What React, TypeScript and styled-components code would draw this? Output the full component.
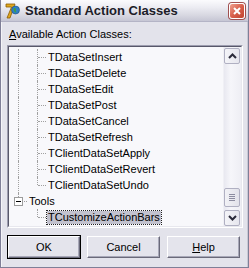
import React from "react";
import styled, { createGlobalStyle } from "styled-components";

const Global = createGlobalStyle`
  html, body { margin: 0; padding: 0; background: #ffffff; }
  body { font-family: "Liberation Sans", Arial, sans-serif; }
`;

const Window = styled.div`
  width: 249px;
  height: 268px;
  box-sizing: border-box;
  display: flex;
  flex-direction: column;
  background: #e3e3eb;
  border: 1px solid #7f7f97;
  border-top: none;
  overflow: hidden;
`;

const TitleBar = styled.div`
  height: 22px;
  flex: none;
  display: flex;
  align-items: center;
  padding: 0 2px 0 2px;
  background: linear-gradient(#fbfbfd 0%, #ececf2 35%, #d6d6e0 75%, #c6c6d4 100%);
  border-bottom: 1px solid #b4b4c6;
  box-sizing: border-box;
`;

const Title = styled.span`
  font-family: "Liberation Sans", Arial, sans-serif;
  font-weight: bold;
  font-size: 13px;
  color: #1c1c28;
  margin-left: 4px;
  flex: 1;
  white-space: nowrap;
`;

const CloseBtn = styled.div`
  width: 14px;
  height: 14px;
  border-radius: 3px;
  background: linear-gradient(135deg, #f0a090 0%, #d8604c 50%, #c04430 100%);
  border: 1px solid #ffffff;
  box-shadow: 0 0 0 1px #a05050;
  display: flex;
  align-items: center;
  justify-content: center;
  margin-right: 1px;
`;

const Body = styled.div`
  flex: 1;
  display: flex;
  flex-direction: column;
  padding: 6px 5px 0 5px;
  border-left: 1px solid #f4f4f8;
  border-right: 1px solid #c8c8d4;
`;

const Label = styled.div`
  font-size: 11px;
  line-height: 13px;
  color: #000;
  margin-left: 2px;
  height: 13px;
  white-space: nowrap;
`;

const U = styled.span`
  text-decoration: underline;
`;

const ListBox = styled.div`
  margin-top: 4px;
  width: 236px;
  height: 183px;
  box-sizing: border-box;
  border-top: 1px solid #9d9daf;
  border-left: 1px solid #9d9daf;
  border-right: 1px solid #ffffff;
  border-bottom: 1px solid #ffffff;
  display: flex;
`;

const ListInner = styled.div`
  flex: 1;
  display: flex;
  border-top: 1px solid #58586a;
  border-left: 1px solid #58586a;
  border-right: 1px solid #e8e8ee;
  border-bottom: 1px solid #e8e8ee;
  background: #f8f8fb;
  overflow: hidden;
`;

const Tree = styled.div`
  flex: 1;
  padding-top: 2px;
  display: flex;
  flex-direction: column;
`;

const Row = styled.div`
  height: 16px;
  display: flex;
  align-items: center;
  flex: none;
`;

const Guide = styled.div<{ $v: "full" | "top" | "none"; $h?: boolean }>`
  position: relative;
  width: 19px;
  height: 16px;
  flex: none;
  &::before {
    content: "";
    display: ${(p) => (p.$v === "none" ? "none" : "block")};
    position: absolute;
    left: 9px;
    top: 0;
    height: ${(p) => (p.$v === "full" ? "16px" : "8px")};
    border-left: 1px dotted #a0a0a0;
  }
  &::after {
    content: "";
    display: ${(p) => (p.$h ? "block" : "none")};
    position: absolute;
    left: 10px;
    top: 8px;
    width: 8px;
    border-top: 1px dotted #a0a0a0;
  }
`;

const ExpandBox = styled.div`
  position: absolute;
  left: 5px;
  top: 4px;
  width: 7px;
  height: 7px;
  border: 1px solid #9c9c9c;
  background: #ffffff;
  z-index: 1;
  &::before {
    content: "";
    position: absolute;
    left: 1px;
    top: 3px;
    width: 5px;
    height: 1px;
    background: #000;
  }
`;

const ItemText = styled.span<{ $selected?: boolean }>`
  font-size: 11px;
  line-height: 13px;
  color: #000;
  white-space: nowrap;
  padding: 0 1px;
  background: ${(p) => (p.$selected ? "#c2c2ce" : "transparent")};
  outline: ${(p) => (p.$selected ? "1px dotted #202020" : "none")};
  outline-offset: 0;
`;

const ScrollBar = styled.div`
  width: 17px;
  flex: none;
  display: flex;
  flex-direction: column;
  background: linear-gradient(90deg, #e8e8f0 0%, #f6f6fa 40%, #eeeef4 100%);
  border-left: 1px solid #f0f0f5;
`;

const ScrollBtn = styled.div`
  height: 16px;
  box-sizing: border-box;
  margin: 1px 1px 0 0;
  border: 1px solid #b0b0c2;
  border-radius: 2px;
  background: linear-gradient(90deg, #f4f4f8 0%, #e6e6ee 100%);
  display: flex;
  align-items: center;
  justify-content: center;
  flex: none;
`;

const Track = styled.div`
  flex: 1;
  display: flex;
  flex-direction: column;
  justify-content: flex-end;
`;

const Thumb = styled.div`
  height: 19px;
  box-sizing: border-box;
  margin: 0 1px 2px 0;
  border: 1px solid #b0b0c2;
  border-radius: 2px;
  background: linear-gradient(90deg, #f2f2f6 0%, #e2e2ea 100%);
  display: flex;
  flex-direction: column;
  align-items: center;
  justify-content: center;
  gap: 1px;
`;

const Grip = styled.div`
  width: 6px;
  height: 1px;
  background: #8c8ca0;
`;

const ButtonRow = styled.div`
  display: flex;
  gap: 7px;
  margin-top: 8px;
  padding-left: 1px;
`;

const Button = styled.div<{ $default?: boolean }>`
  width: ${(p) => (p.$default ? "72px" : "73px")};
  height: 22px;
  box-sizing: border-box;
  display: flex;
  align-items: center;
  justify-content: center;
  font-size: 11px;
  color: #000;
  background: #e4e4ec;
  border-top: 1px solid #ffffff;
  border-left: 1px solid #ffffff;
  border-right: 1px solid #6a6a7a;
  border-bottom: 1px solid #6a6a7a;
  box-shadow: inset -1px -1px 0 #a8a8b8;
  outline: ${(p) => (p.$default ? "1px solid #000" : "none")};
  outline-offset: 0;
`;

const Chevron = ({ up }: { up?: boolean }) => (
  <svg width="9" height="6" viewBox="0 0 9 6">
    <path
      d={up ? "M1 5 L4.5 1.5 L8 5" : "M1 1 L4.5 4.5 L8 1"}
      fill="none"
      stroke="#2a2a3a"
      strokeWidth="2"
    />
  </svg>
);

const AppIcon = () => (
  <svg width="18" height="18" viewBox="0 0 18 18">
    <path d="M3 2 H12 L7 16 H4 L8.5 5 H3 Z" fill="#e0a820" stroke="#8a5a00" strokeWidth="0.8" />
    <circle cx="12.5" cy="8" r="4" fill="#2f7fc8" stroke="#1a4f80" strokeWidth="0.6" />
    <path d="M10.5 6.5 Q12 5.5 13 7 Q12 9 13.5 10.5 Q11.5 10.5 11 9 Z" fill="#3fa040" />
  </svg>
);

const CloseX = () => (
  <svg width="8" height="8" viewBox="0 0 8 8">
    <path d="M1 1 L7 7 M7 1 L1 7" stroke="#ffffff" strokeWidth="2" />
  </svg>
);

const dataItems = [
  "TDataSetInsert",
  "TDataSetDelete",
  "TDataSetEdit",
  "TDataSetPost",
  "TDataSetCancel",
  "TDataSetRefresh",
  "TClientDataSetApply",
  "TClientDataSetRevert",
  "TClientDataSetUndo",
];

export default function App() {
  return (
    <>
      <Global />
      <Window>
        <TitleBar>
          <AppIcon />
          <Title>Standard Action Classes</Title>
          <CloseBtn>
            <CloseX />
          </CloseBtn>
        </TitleBar>
        <Body>
          <Label>
            <U>A</U>vailable Action Classes:
          </Label>
          <ListBox>
            <ListInner>
              <Tree>
                {dataItems.map((t, i) => (
                  <Row key={t}>
                    <Guide $v="full" />
                    <Guide $v={i === dataItems.length - 1 ? "top" : "full"} $h />
                    <ItemText>{t}</ItemText>
                  </Row>
                ))}
                <Row>
                  <Guide $v="top" $h>
                    <ExpandBox />
                  </Guide>
                  <ItemText>Tools</ItemText>
                </Row>
                <Row>
                  <Guide $v="none" />
                  <Guide $v="top" $h />
                  <ItemText $selected>TCustomizeActionBars</ItemText>
                </Row>
              </Tree>
              <ScrollBar>
                <ScrollBtn>
                  <Chevron up />
                </ScrollBtn>
                <Track>
                  <Thumb>
                    <Grip />
                    <Grip />
                    <Grip />
                    <Grip />
                  </Thumb>
                </Track>
                <ScrollBtn>
                  <Chevron />
                </ScrollBtn>
              </ScrollBar>
            </ListInner>
          </ListBox>
          <ButtonRow>
            <Button $default>OK</Button>
            <Button>Cancel</Button>
            <Button>
              <span>
                <U>H</U>elp
              </span>
            </Button>
          </ButtonRow>
        </Body>
      </Window>
    </>
  );
}
